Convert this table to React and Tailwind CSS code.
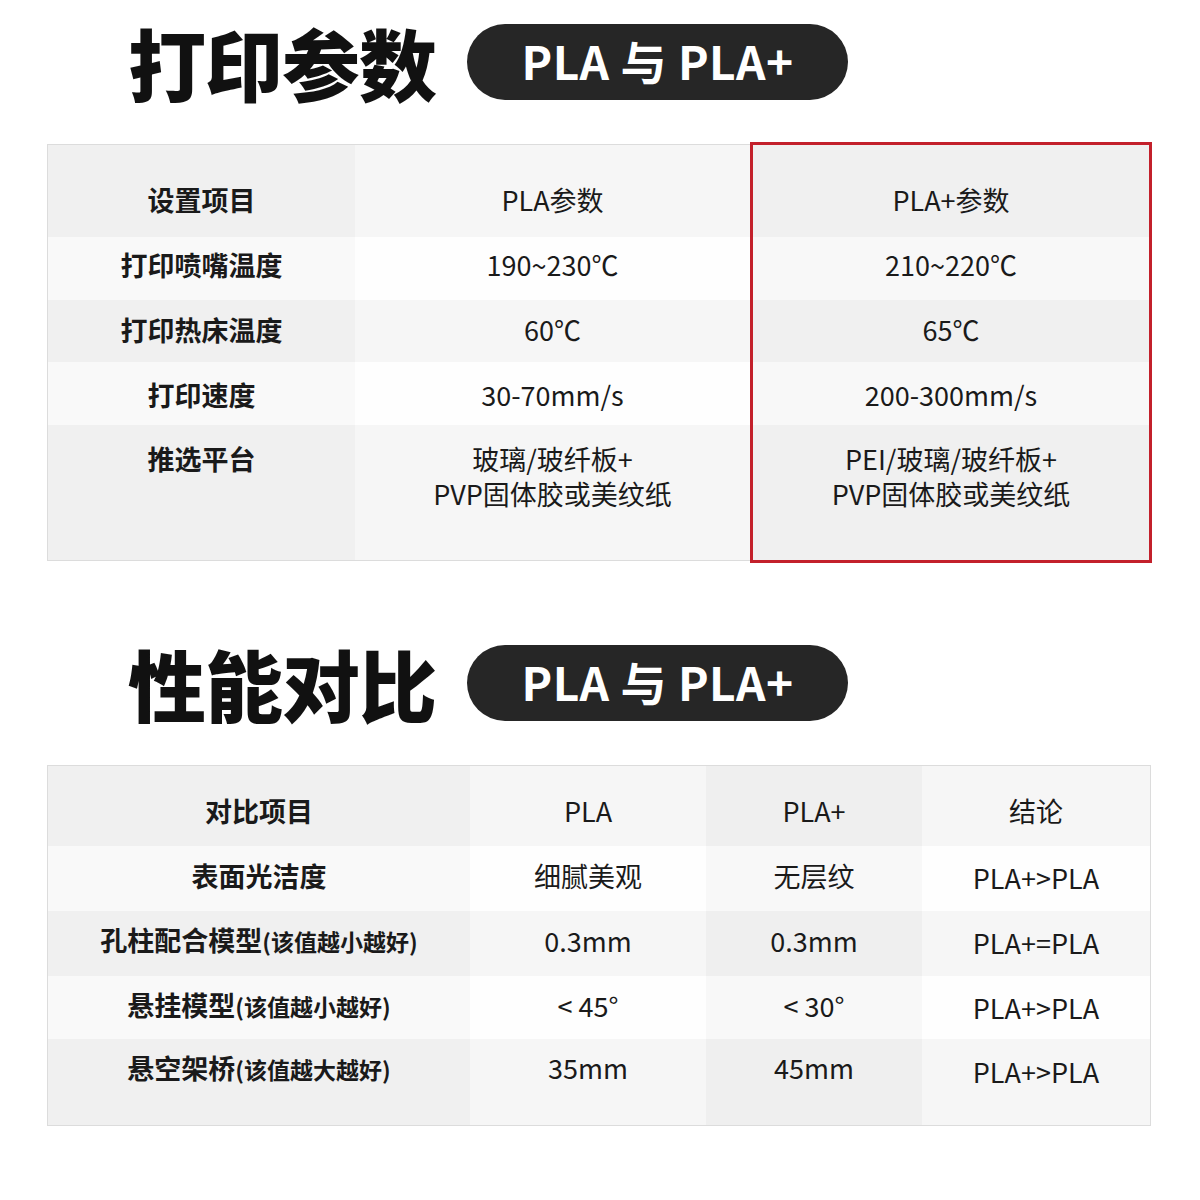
import React from "react";

const font = { fontFamily: '"Noto Sans CJK SC", "Noto Sans", sans-serif' };

function Title({ text }) {
  return (
    <div className="flex items-center h-[76px] pl-[128px]">
      <div className="text-[78px] font-black leading-none text-[#111] tracking-[-1px]">{text}</div>
      <div className="ml-[31px] w-[381px] h-[76px] rounded-full bg-[#262626] flex items-center justify-center pb-[4px]">
        <span className="text-white text-[46px] font-bold leading-none tracking-[0.5px]">PLA 与 PLA+</span>
      </div>
    </div>
  );
}

const t1Rows = [
  { h: "h-[92px]", pad: "pt-[16px] items-center" },
  { h: "h-[63px]", pad: "pb-[9px] items-center" },
  { h: "h-[62px]", pad: "pb-[4px] items-center" },
  { h: "h-[63px]", pad: "pt-[1px] items-center" },
  { h: "h-[135px]", pad: "pt-[16px] items-start" },
];

const t1Data = [
  ["设置项目", "打印喷嘴温度", "打印热床温度", "打印速度", "推选平台"],
  ["PLA参数", "190~230℃", "60℃", "30-70mm/s", ["玻璃/玻纤板+", "PVP固体胶或美纹纸"]],
  ["PLA+参数", "210~220℃", "65℃", "200-300mm/s", ["PEI/玻璃/玻纤板+", "PVP固体胶或美纹纸"]],
];

function Col({ items, rows, bgs, bold, width, extra = "" }) {
  return (
    <div className={`flex flex-col ${width} ${extra}`}>
      {items.map((it, i) => (
        <div
          key={i}
          className={`flex justify-center ${rows[i].h} ${rows[i].pad} ${bgs[i % 2 === 0 ? 0 : 1]} text-[#1a1a1a] ${bold ? "font-bold" : "font-normal"}`}
        >
          {Array.isArray(it) ? (
            <div className="text-center text-[27px] leading-[35px]">
              {it.map((l, j) => (
                <div key={j}>{l}</div>
              ))}
            </div>
          ) : (
            <div className="text-center text-[27px] leading-[35px]">{it}</div>
          )}
        </div>
      ))}
    </div>
  );
}

const t2Rows = [
  { h: "h-[80px]", pad: "pt-[8px] items-center" },
  { h: "h-[65px]", pad: "pb-[6px] items-center" },
  { h: "h-[65px]", pad: "pb-[6px] items-center" },
  { h: "h-[63px]", pad: "pb-[5px] items-center" },
  { h: "h-[86px]", pad: "pt-[11px] items-start" },
];

function Label({ main, sub }) {
  return (
    <span>
      <span className="text-[27px]">{main}</span>
      {sub && <span className="text-[23px]">{sub}</span>}
    </span>
  );
}

const t2Data = [
  [
    <Label main="对比项目" />,
    <Label main="表面光洁度" />,
    <Label main="孔柱配合模型" sub="(该值越小越好)" />,
    <Label main="悬挂模型" sub="(该值越小越好)" />,
    <Label main="悬空架桥" sub="(该值越大越好)" />,
  ],
  ["PLA", "细腻美观", "0.3mm", "< 45°", "35mm"],
  ["PLA+", "无层纹", "0.3mm", "< 30°", "45mm"],
  ["结论", "PLA+>PLA", "PLA+=PLA", "PLA+>PLA", "PLA+>PLA"],
];

const t2Offsets = ["pt-[1px]", "pt-[4px]", "pt-[4px]", "pt-[4px]", "pt-[4px]"];

export default function App() {
  return (
    <div style={font} className="w-[1200px] h-[1200px] bg-white pt-[24px]">
      <Title text="打印参数" />

      <div className="mt-[44px] ml-[47px] w-[1104px] flex">
        <div className="flex border border-r-0 border-[#dcdcdc]">
          <Col items={t1Data[0]} rows={t1Rows} bgs={["bg-[#f0f0f0]", "bg-[#f9f9f9]"]} bold width="w-[307px]" />
          <Col items={t1Data[1]} rows={t1Rows} bgs={["bg-[#f6f6f6]", "bg-[#fefefe]"]} width="w-[395px]" />
        </div>
        <div className="-my-[2px] border-[3px] border-[#c3202b]">
          <Col items={t1Data[2]} rows={t1Rows} bgs={["bg-[#f0f0f0]", "bg-[#f8f8f8]"]} width="w-[396px]" />
        </div>
      </div>

      <div className="mt-[84px]">
        <Title text="性能对比" />
      </div>

      <div className="mt-[44px] ml-[47px] w-[1104px] flex border border-[#dcdcdc]">
        <Col items={t2Data[0]} rows={t2Rows} bgs={["bg-[#f0f0f0]", "bg-[#f9f9f9]"]} bold width="w-[422px]" />
        <Col items={t2Data[1]} rows={t2Rows} bgs={["bg-[#f6f6f6]", "bg-[#fefefe]"]} width="w-[236px]" />
        <Col items={t2Data[2]} rows={t2Rows} bgs={["bg-[#efefef]", "bg-[#f8f8f8]"]} width="w-[216px]" />
        <Col
          items={t2Data[3].map((x, i) => (
            <span className={`inline-block ${t2Offsets[i]}`}>{x}</span>
          ))}
          rows={t2Rows}
          bgs={["bg-[#f6f6f6]", "bg-[#fefefe]"]}
          width="w-[228px]"
        />
      </div>
    </div>
  );
}
